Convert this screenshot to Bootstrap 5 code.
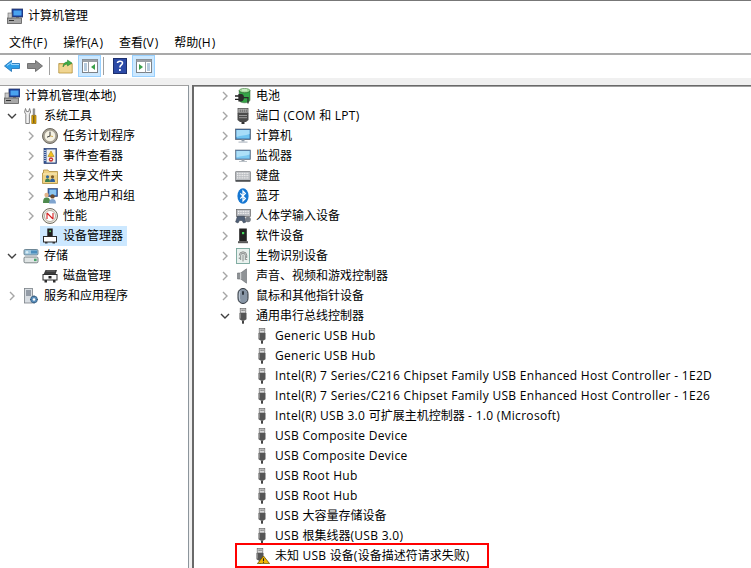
<!DOCTYPE html>
<html lang="zh-CN">
<head>
<meta charset="utf-8">
<title>计算机管理</title>
<link rel="stylesheet" href="https://cdn.jsdelivr.net/npm/bootstrap@5.3.0/dist/css/bootstrap.min.css">
<style>
html,body{height:100%;overflow:hidden;background:#fff}
body{font:12px/20px "Open Sans","Noto Sans CJK SC",sans-serif;color:#000}
.lat{letter-spacing:.3px}
.win{height:568px;width:751px;border-top:1px solid #777;overflow:hidden}
.titlebar{height:30px;padding-left:7px;gap:5px}
.menubar{height:24px;border-bottom:2px solid #a9a9a9;padding-left:9px;gap:16px;padding-top:2px}
.menubar .lat{letter-spacing:1px}
.toolbar{height:23px;padding-left:4px}
.tb-ico{width:16px;height:16px;flex:none}
.tb-btn{width:23px;height:22px;background:#cce8ff;border:1px solid #99d1ff;flex:none}
.tb-sep{width:1px;height:18px;background:#a0a0a0;flex:none}
.band{height:7px;background:#f0f0f0}
.panes{height:484px}
.pane-l{width:189px;flex:none;border-top:1px solid #a0a0a0;border-right:1px solid #8c959c}
.gutter{width:3px;flex:none;background:#f0f0f0}
.pane-r{flex:1;border-top:1px solid #696969;border-left:2px solid #696969;min-width:0;box-shadow:inset 0 1px #a0a0a0}
.tree-row{height:20px;white-space:nowrap}
.pl-root{padding-left:4px}
.pl-a{padding-left:5px}
.pl-b{padding-left:24px}
.pl-c{padding-left:24px}
.pl-c .node{margin-left:-1px}
.pl-d{padding-left:42px}
.chev{width:18px;height:20px;flex:none;padding-left:2px}
.chev svg{display:block;margin-top:5px;width:10px;height:10px}
.node{gap:5px;height:20px}
.node svg{width:16px;height:16px;flex:none}
.node-sel{background:#cce8ff;margin-left:-2px;padding-left:2px;padding-right:4px}
.red-box{position:absolute;left:-19px;top:-3px;width:254px;height:25px;border:2px solid #f00}
.sp-a{margin-right:7px}
.sp-b{margin-left:6px;margin-right:8px}
.sp-c{margin-right:4px}
.sp-d{margin-left:2px;margin-right:9px}
.sp-e{margin-right:3px}
</style>
</head>
<body>
<svg width="0" height="0" class="position-absolute">
<defs>
<symbol id="cm" viewBox="0 0 16 16"><rect x="5" y="1" width="11" height="8" fill="#1a3f9e" stroke="#2b3a66" stroke-width=".8"/><rect x="6.5" y="2.5" width="8" height="5" fill="#4aa3ef"/><rect x="9" y="9" width="3" height="2" fill="#777"/><rect x="0.5" y="10" width="14" height="5.5" fill="#a8a8a8" stroke="#5a5a5a" stroke-width=".8"/><rect x="2" y="12" width="5" height="1" fill="#333"/><rect x="1" y="5" width="4" height="5" fill="#c9c9c9" stroke="#666" stroke-width=".6"/></symbol>
<symbol id="tools" viewBox="0 0 16 16"><path d="M2.5 .5 3.6 3.6H5.6L6.6 .5 7.6 4 6.4 6.5V15.5H2.8V6.5L1.6 4Z" fill="#f2f2f2" stroke="#777" stroke-width=".9"/><path d="M10 .8h1.8v6.4H10z" fill="#9a9a9a" stroke="#666" stroke-width=".4"/><path d="M8.8 7.4h4.2v8.2H8.8z" fill="#f2b200" stroke="#8a6200" stroke-width=".7"/><path d="M10.9 8v7" stroke="#333"/></symbol>
<symbol id="clock" viewBox="0 0 16 16"><circle cx="8" cy="8" r="7.5" fill="#a6a094" stroke="#6e6a60"/><circle cx="8" cy="8" r="5.7" fill="#f5f2e4" stroke="#8a8577" stroke-width=".5"/><path d="M8 3.6V8l-3 1.2" fill="none" stroke="#3b3b3b" stroke-width="1"/><path d="M8 8l3 .5" stroke="#c89a2e" stroke-width=".8"/></symbol>
<symbol id="event" viewBox="0 0 16 16"><rect x="2" y="0.5" width="12.5" height="15" fill="#35589b" stroke="#2a3c6b" stroke-width=".7"/><rect x="4.5" y="1.5" width="9" height="13" fill="#f3f1e9"/><path d="M3 2v12" stroke="#dfe6f4" stroke-dasharray="1 1" stroke-width="1.4"/><path d="M9 3l3 5.5H6z" fill="#f3c21f" stroke="#9a7400" stroke-width=".5"/><circle cx="9" cy="11.5" r="2.2" fill="#cd3a3a"/><path d="M8 11.5h2" stroke="#fff" stroke-width=".8"/></symbol>
<symbol id="share" viewBox="0 0 16 16"><path d="M.5 5V15.5H15.5V3.5H7L6 2H1.5V5Z" fill="#efd284" stroke="#ad8c3c" stroke-width=".8"/><path d="M1 6H15" stroke="#f8ecc0"/><circle cx="5.5" cy="8.8" r="1.6" fill="#336a9e"/><path d="M3 14c0-3 1-3.6 2.5-3.6S8 11 8 14Z" fill="#3c7f4f"/><circle cx="10.5" cy="8.8" r="1.6" fill="#7a5a2a"/><path d="M8 14c0-3 1-3.6 2.5-3.6s2.5.6 2.5 3.6Z" fill="#2d5f9c"/></symbol>
<symbol id="users" viewBox="0 0 16 16"><rect x="6" y="0.5" width="9.5" height="8" fill="#2b62b5" stroke="#3f4f6f" stroke-width=".7"/><rect x="7.3" y="1.6" width="7" height="5.6" fill="#8cc6ef"/><circle cx="4.6" cy="7" r="2.2" fill="#e2b48a"/><path d="M1 15c0-4.5 1.4-5.6 3.6-5.6S8.2 10.5 8.2 15Z" fill="#4e8a4e"/><circle cx="10.5" cy="8.4" r="2.2" fill="#6b4a2d"/><path d="M7 15.5c0-3.4 1.4-4.6 3.5-4.6s3.5 1.2 3.5 4.6Z" fill="#7fa4cf"/></symbol>
<symbol id="perf" viewBox="0 0 16 16"><circle cx="8" cy="8" r="7.5" fill="#ece9df" stroke="#716e64"/><circle cx="8" cy="8" r="5.5" fill="#fff" stroke="#8a8577" stroke-width=".6"/><path d="M5 5l6 6M5 11V5M11 5v6" fill="none" stroke="#d32020" stroke-width="1.1"/></symbol>
<symbol id="dm" viewBox="0 0 16 16"><rect x="5.3" y="0.5" width="5.4" height="8" fill="#1f1f1f"/><rect x="7.3" y="2.5" width="1.6" height="1.6" fill="#5fdc6a"/><rect x="1.5" y="8.5" width="13" height="5.5" fill="#fff" stroke="#2b2b2b"/><rect x="3" y="14" width="2.5" height="1.5" fill="#333"/><rect x="10.5" y="14" width="2.5" height="1.5" fill="#333"/></symbol>
<symbol id="store" viewBox="0 0 16 16"><rect x="1" y="1.5" width="14" height="5.5" rx="1.2" fill="#9fc7de" stroke="#55707f" stroke-width=".8"/><rect x="8" y="2.5" width="6" height="3" fill="#4b8ebd"/><circle cx="4" cy="4.2" r="1.3" fill="#d9ecf4"/><rect x="1" y="9" width="14" height="5.8" rx="1.2" fill="#dfe4e4" stroke="#5f6b6f" stroke-width=".8"/><rect x="11" y="10.7" width="2.6" height="2.4" fill="#4aa56b"/></symbol>
<symbol id="disk" viewBox="0 0 16 16"><path d="M3.5 2h11.5l-1.5 4.5H1.5z" fill="#3c3c3c"/><path d="M4.5 3h8.5" stroke="#8a8a8a" stroke-width=".7"/><rect x="1" y="6.5" width="14" height="5.5" fill="#fbfbfb" stroke="#2f2f2f"/><rect x="6.5" y="8" width="3" height="2.5" fill="#222"/><rect x="2.5" y="12" width="2.5" height="2.5" fill="#2d2d2d"/><rect x="11" y="12" width="2.5" height="2.5" fill="#2d2d2d"/></symbol>
<symbol id="svc" viewBox="0 0 16 16"><rect x="1.5" y="0.5" width="8" height="14.5" fill="#d8dde2" stroke="#7a8087" stroke-width=".8"/><path d="M3 3h5M3 5h5M3 7h5" stroke="#4f5b6a"/><circle cx="11" cy="11.5" r="3.4" fill="#5b8fbc" stroke="#2f5678" stroke-width=".7"/><circle cx="11" cy="11.5" r="1.2" fill="#fff"/><path d="M11 7.4v1.4M11 14.2v1.4M7 11.5h1.4M13.6 11.5H15" stroke="#2f5678" stroke-width="1.1"/></symbol>
<symbol id="bat" viewBox="0 0 16 16"><ellipse cx="9.6" cy="2.6" rx="5.4" ry="2.2" fill="#a8dfa0" stroke="#3c7a3c" stroke-width=".6"/><path d="M4.2 2.6V12c0 1.6 2.4 2.8 5.4 2.8S15 13.6 15 12V2.6c0 1.2-2.4 2.2-5.4 2.2S4.2 3.8 4.2 2.6Z" fill="#35a548" stroke="#2b5e2b" stroke-width=".5"/><path d="M7 2h5" stroke="#fff" stroke-width=".7"/><path d="M0 8h4M0 11.4h4" stroke="#1f1f1f" stroke-width="1.3"/><path d="M3.4 6h3c1.5 0 2.6 1.2 2.6 3.6s-1.1 3.8-2.6 3.8h-3z" fill="#2b2b2b"/><path d="M8.5 9.7h4.5V15.5" fill="none" stroke="#2b2b2b" stroke-width="1.3"/></symbol>
<symbol id="port" viewBox="0 0 16 16"><rect x="3" y="0.5" width="10" height="4.5" fill="#b6b6b6" stroke="#565656" stroke-width=".8"/><path d="M5.2 1.5v2.5M7.2 1.5v2.5M9.2 1.5v2.5M11.2 1.5v2.5" stroke="#4d4d4d" stroke-width=".8"/><path d="M2.5 5h11v7l-2.5 2H5l-2.5-2z" fill="#4b4b4b"/><path d="M4 7.5h8M4 9.7h8" stroke="#9a9a9a"/><path d="M6.5 14h3v2h-3z" fill="#333"/></symbol>
<symbol id="pc" viewBox="0 0 16 16"><rect x="0.5" y="1" width="15" height="10.5" fill="#3f6ea6" stroke="#44505f" stroke-width=".6"/><rect x="1.5" y="2" width="13" height="8.5" fill="#6fc3f0"/><path d="M1.5 2h13v4c-4 2-9 1-13 3z" fill="#a7dcf8"/><path d="M6.5 11.5h3v2h-3z" fill="#8e9aa6"/><path d="M3.5 13.5h9v1.2h-9z" fill="#b7bec6"/></symbol>
<symbol id="mon" viewBox="0 0 16 16"><rect x="0.5" y="2" width="15" height="9.5" fill="#5f8bb8" stroke="#5a6a7a" stroke-width=".6"/><rect x="1.5" y="3" width="13" height="7.5" fill="#7cc9f1"/><path d="M1.5 3h13v3.5c-4 2-9 1-13 3z" fill="#aee0f8"/><path d="M6.5 11.5h3v1.5h-3z" fill="#9aa3ac"/><path d="M4 13h8v1H4z" fill="#bcc2c8"/></symbol>
<symbol id="kbd" viewBox="0 0 16 16"><rect x="0.5" y="3.5" width="15" height="9" rx=".6" fill="#b9bcc0" stroke="#7a7d81" stroke-width=".7"/><path d="M2 5.5h12M2 7.7h12M2 9.9h12" stroke="#eeeeee" stroke-dasharray="1.1 .6" stroke-width="1.3"/><rect x="0.5" y="12" width="15" height="1.8" fill="#4f5255"/></symbol>
<symbol id="bt" viewBox="0 0 16 16"><ellipse cx="8" cy="8" rx="5.6" ry="7.8" fill="#1677d2"/><path d="M5.3 5.4 10.4 10.5 8 13V3l2.4 2.5L5.3 10.6" fill="none" stroke="#fff" stroke-width="1.2"/></symbol>
<symbol id="hid" viewBox="0 0 16 16"><rect x="1.5" y="1.5" width="14" height="7" fill="#b9bcc2" stroke="#666" stroke-width=".7"/><path d="M3 3.4h11M3 5.4h11" stroke="#f3f3f3" stroke-dasharray="1 .7" stroke-width="1.1"/><path d="M.6 14 2.4 8.2h7L11 14 8.6 15 7 12.5H4.6L3 15Z" fill="#4f5f76" stroke="#333c4a" stroke-width=".5"/><circle cx="13" cy="11.5" r="2.8" fill="#777d86"/></symbol>
<symbol id="soft" viewBox="0 0 16 16"><rect x="4.2" y="0.5" width="7.6" height="13" fill="#222"/><rect x="7" y="4" width="2.2" height="2.2" fill="#43d75c"/><rect x="3" y="13.2" width="10" height="2" fill="#5a5a5a"/></symbol>
<symbol id="bio" viewBox="0 0 16 16"><rect x="1.5" y=".5" width="13" height="15" fill="#e9f1ee" stroke="#77a59a" stroke-width=".9"/><g fill="none" stroke="#666" stroke-width=".75"><path d="M4.3 7.5a3.7 3.7 0 0 1 7.4 0v2.5"/><path d="M5.7 12V7.5a2.3 2.3 0 0 1 4.6 0V12"/><path d="M8 6.5V13.5"/><path d="M4.3 9.5v1.5M11.7 11v1"/></g></symbol>
<symbol id="snd" viewBox="0 0 16 16"><path d="M2.5 5h3.2L11.5 .8V15.2L5.7 11H2.5z" fill="#8f9396" stroke="#686c70" stroke-width=".6"/><path d="M5.7 5V11" stroke="#e1e3e5"/></symbol>
<symbol id="mouse" viewBox="0 0 16 16"><rect x="3" y="0.5" width="10" height="15" rx="5" fill="#8795a5" stroke="#30363d" stroke-width="1"/><rect x="7" y="3" width="2" height="4" rx="1" fill="#2f3740"/><path d="M5 3.5c-1 3-1 6 0 9" stroke="#c7d1dc" fill="none"/></symbol>
<symbol id="usb" viewBox="0 0 16 16"><rect x="5.2" y="0.5" width="5.6" height="4.5" fill="#dadada" stroke="#6d6d6d" stroke-width=".7"/><rect x="6.6" y="1.6" width="1" height="1.2" fill="#444"/><rect x="8.5" y="1.6" width="1" height="1.2" fill="#444"/><path d="M4.5 5h7v6.2l-2 1.4h-3l-2-1.4z" fill="#565656"/><path d="M5.4 5.4v5.2" stroke="#8c8c8c"/><rect x="7" y="12.4" width="2" height="3.3" fill="#444"/></symbol>
<symbol id="c-r" viewBox="0 0 10 10"><path d="M3 1l4 4-4 4" fill="none" stroke="#a6a6a6" stroke-width="1.4"/></symbol>
<symbol id="c-d" viewBox="0 0 10 10"><path d="M1 3l4 4 4-4" fill="none" stroke="#404040" stroke-width="1.4"/></symbol>
</defs>
</svg>

<div class="win d-flex flex-column">
  <div class="titlebar d-flex align-items-center">
    <svg class="tb-ico"><use href="#cm"/></svg><span>计算机管理</span>
  </div>
  <div class="menubar d-flex align-items-center"><span>文件(<span class="lat">F</span>)</span><span>操作(<span class="lat">A</span>)</span><span>查看(<span class="lat">V</span>)</span><span>帮助(<span class="lat">H</span>)</span></div>
  <div class="toolbar d-flex align-items-center">
    <svg class="tb-ico sp-a" viewBox="0 0 16 16"><path d="M.5 8 7.5 2.5V5.5H15.5V10.5H7.5V13.5Z" fill="#2f9fe8" stroke="#1a6db2" stroke-width=".8"/><path d="M3 7.5l4.5-3V6.5H15" fill="none" stroke="#a8dcff" stroke-width=".9"/></svg>
    <svg class="tb-ico" viewBox="0 0 16 16"><path d="M15.5 8 8.5 2.5V5.5H.5V10.5H8.5V13.5Z" fill="#8a8a8a" stroke="#5e5e5e" stroke-width=".8"/></svg>
    <span class="tb-sep sp-b"></span>
    <svg class="tb-ico sp-c" viewBox="0 0 16 16"><path d="M.8 5.5H14.2V15H.8Z" fill="#e9c875" stroke="#b08f3c" stroke-width=".8"/><path d="M1.5 7h12V14.3h-12z" fill="#f0d591"/><path d="M5 9c0-3.5 2-5 4.5-5V2L14 5 9.5 8V6C7.5 6 6 7 5 9Z" fill="#3fae49" stroke="#237a2a" stroke-width=".5"/></svg>
    <span class="tb-btn d-flex align-items-center justify-content-center"><svg class="tb-ico" viewBox="0 0 16 16"><rect x=".5" y="1.5" width="15" height="13" fill="#fff" stroke="#7c8288"/><path d="M.5 1.5h15v2.5H.5z" fill="#9aa0a6"/><path d="M2 6h3M2 8h3M2 10h3M2 12h3" stroke="#6a96bd"/><path d="M6.5 4v10.5" stroke="#9aa0a6"/><path d="M13 6v6L9 9z" fill="#3aa14a"/></svg></span>
    <span class="tb-sep sp-d"></span>
    <svg class="tb-ico sp-e" viewBox="0 0 16 16"><rect x=".5" y=".5" width="13" height="15" fill="#2c4aa6" stroke="#1d2f6d"/><path d="M4.5 5c0-2 5-2.6 5 0 0 2-2.6 2-2.6 4.5" fill="none" stroke="#fff" stroke-width="1.6"/><rect x="6" y="11" width="1.8" height="2" fill="#fff"/></svg>
    <span class="tb-btn d-flex align-items-center justify-content-center"><svg class="tb-ico" viewBox="0 0 16 16"><rect x=".5" y="1.5" width="15" height="13" fill="#fff" stroke="#7c8288"/><path d="M.5 1.5h15v2.5H.5z" fill="#9aa0a6"/><path d="M11 6h3M11 8h3M11 10h3M11 12h3" stroke="#6a96bd"/><path d="M9.5 4v10.5" stroke="#9aa0a6"/><path d="M3 6v6l4-3z" fill="#3aa14a"/></svg></span>
  </div>
  <div class="band"></div>
  <div class="panes d-flex">
    <div class="pane-l">
      <div class="tree-row pl-root d-flex"><span class="node d-flex align-items-center"><svg><use href="#cm"/></svg>计算机管理(本地)</span></div>
      <div class="tree-row pl-a d-flex"><span class="chev"><svg><use href="#c-d"/></svg></span><span class="node d-flex align-items-center"><svg><use href="#tools"/></svg>系统工具</span></div>
      <div class="tree-row pl-b d-flex"><span class="chev"><svg><use href="#c-r"/></svg></span><span class="node d-flex align-items-center"><svg><use href="#clock"/></svg>任务计划程序</span></div>
      <div class="tree-row pl-b d-flex"><span class="chev"><svg><use href="#c-r"/></svg></span><span class="node d-flex align-items-center"><svg><use href="#event"/></svg>事件查看器</span></div>
      <div class="tree-row pl-b d-flex"><span class="chev"><svg><use href="#c-r"/></svg></span><span class="node d-flex align-items-center"><svg><use href="#share"/></svg>共享文件夹</span></div>
      <div class="tree-row pl-b d-flex"><span class="chev"><svg><use href="#c-r"/></svg></span><span class="node d-flex align-items-center"><svg><use href="#users"/></svg>本地用户和组</span></div>
      <div class="tree-row pl-b d-flex"><span class="chev"><svg><use href="#c-r"/></svg></span><span class="node d-flex align-items-center"><svg><use href="#perf"/></svg>性能</span></div>
      <div class="tree-row pl-b d-flex"><span class="chev"></span><span class="node node-sel d-flex align-items-center"><svg><use href="#dm"/></svg>设备管理器</span></div>
      <div class="tree-row pl-a d-flex"><span class="chev"><svg><use href="#c-d"/></svg></span><span class="node d-flex align-items-center"><svg><use href="#store"/></svg>存储</span></div>
      <div class="tree-row pl-b d-flex"><span class="chev"></span><span class="node d-flex align-items-center"><svg><use href="#disk"/></svg>磁盘管理</span></div>
      <div class="tree-row pl-a d-flex"><span class="chev"><svg><use href="#c-r"/></svg></span><span class="node d-flex align-items-center"><svg><use href="#svc"/></svg>服务和应用程序</span></div>
    </div>
    <div class="gutter"></div>
    <div class="pane-r">
      <div class="tree-row pl-c d-flex"><span class="chev"><svg><use href="#c-r"/></svg></span><span class="node d-flex align-items-center"><svg><use href="#bat"/></svg>电池</span></div>
      <div class="tree-row pl-c d-flex"><span class="chev"><svg><use href="#c-r"/></svg></span><span class="node d-flex align-items-center"><svg><use href="#port"/></svg><span>端口<span class="lat"> (COM </span>和<span class="lat"> LPT)</span></span></span></div>
      <div class="tree-row pl-c d-flex"><span class="chev"><svg><use href="#c-r"/></svg></span><span class="node d-flex align-items-center"><svg><use href="#pc"/></svg>计算机</span></div>
      <div class="tree-row pl-c d-flex"><span class="chev"><svg><use href="#c-r"/></svg></span><span class="node d-flex align-items-center"><svg><use href="#mon"/></svg>监视器</span></div>
      <div class="tree-row pl-c d-flex"><span class="chev"><svg><use href="#c-r"/></svg></span><span class="node d-flex align-items-center"><svg><use href="#kbd"/></svg>键盘</span></div>
      <div class="tree-row pl-c d-flex"><span class="chev"><svg><use href="#c-r"/></svg></span><span class="node d-flex align-items-center"><svg><use href="#bt"/></svg>蓝牙</span></div>
      <div class="tree-row pl-c d-flex"><span class="chev"><svg><use href="#c-r"/></svg></span><span class="node d-flex align-items-center"><svg><use href="#hid"/></svg>人体学输入设备</span></div>
      <div class="tree-row pl-c d-flex"><span class="chev"><svg><use href="#c-r"/></svg></span><span class="node d-flex align-items-center"><svg><use href="#soft"/></svg>软件设备</span></div>
      <div class="tree-row pl-c d-flex"><span class="chev"><svg><use href="#c-r"/></svg></span><span class="node d-flex align-items-center"><svg><use href="#bio"/></svg>生物识别设备</span></div>
      <div class="tree-row pl-c d-flex"><span class="chev"><svg><use href="#c-r"/></svg></span><span class="node d-flex align-items-center"><svg><use href="#snd"/></svg>声音、视频和游戏控制器</span></div>
      <div class="tree-row pl-c d-flex"><span class="chev"><svg><use href="#c-r"/></svg></span><span class="node d-flex align-items-center"><svg><use href="#mouse"/></svg>鼠标和其他指针设备</span></div>
      <div class="tree-row pl-c d-flex"><span class="chev"><svg><use href="#c-d"/></svg></span><span class="node d-flex align-items-center"><svg><use href="#usb"/></svg>通用串行总线控制器</span></div>
      <div class="tree-row pl-d d-flex"><span class="chev"></span><span class="node d-flex align-items-center"><svg><use href="#usb"/></svg><span class="lat">Generic USB Hub</span></span></div>
      <div class="tree-row pl-d d-flex"><span class="chev"></span><span class="node d-flex align-items-center"><svg><use href="#usb"/></svg><span class="lat">Generic USB Hub</span></span></div>
      <div class="tree-row pl-d d-flex"><span class="chev"></span><span class="node d-flex align-items-center"><svg><use href="#usb"/></svg><span class="lat">Intel(R) 7 Series/C216 Chipset Family USB Enhanced Host Controller - 1E2D</span></span></div>
      <div class="tree-row pl-d d-flex"><span class="chev"></span><span class="node d-flex align-items-center"><svg><use href="#usb"/></svg><span class="lat">Intel(R) 7 Series/C216 Chipset Family USB Enhanced Host Controller - 1E26</span></span></div>
      <div class="tree-row pl-d d-flex"><span class="chev"></span><span class="node d-flex align-items-center"><svg><use href="#usb"/></svg><span><span class="lat">Intel(R) USB 3.0 </span>可扩展主机控制器<span class="lat"> - 1.0 (Microsoft)</span></span></span></div>
      <div class="tree-row pl-d d-flex"><span class="chev"></span><span class="node d-flex align-items-center"><svg><use href="#usb"/></svg><span class="lat">USB Composite Device</span></span></div>
      <div class="tree-row pl-d d-flex"><span class="chev"></span><span class="node d-flex align-items-center"><svg><use href="#usb"/></svg><span class="lat">USB Composite Device</span></span></div>
      <div class="tree-row pl-d d-flex"><span class="chev"></span><span class="node d-flex align-items-center"><svg><use href="#usb"/></svg><span class="lat">USB Root Hub</span></span></div>
      <div class="tree-row pl-d d-flex"><span class="chev"></span><span class="node d-flex align-items-center"><svg><use href="#usb"/></svg><span class="lat">USB Root Hub</span></span></div>
      <div class="tree-row pl-d d-flex"><span class="chev"></span><span class="node d-flex align-items-center"><svg><use href="#usb"/></svg><span><span class="lat">USB </span>大容量存储设备</span></span></div>
      <div class="tree-row pl-d d-flex"><span class="chev"></span><span class="node d-flex align-items-center"><svg><use href="#usb"/></svg><span><span class="lat">USB </span>根集线器<span class="lat">(USB 3.0)</span></span></span></div>
      <div class="tree-row pl-d d-flex"><span class="chev"></span><span class="node d-flex align-items-center position-relative"><svg viewBox="0 0 16 16"><use href="#usb" x="-2" width="16" height="16"/><path d="M9.5 8 3.4 15.6H15.6Z" fill="#f2b705" stroke="#6d5200" stroke-width=".8"/><path d="M9.5 10.2v2.8M9.5 13.8v1" stroke="#222" stroke-width="1.1"/></svg><span>未知<span class="lat"> USB </span>设备<span class="lat">(</span>设备描述符请求失败<span class="lat">)</span></span><span class="red-box"></span></span></div>
    </div>
  </div>
</div>
<script src="https://cdn.jsdelivr.net/npm/bootstrap@5.3.0/dist/js/bootstrap.bundle.min.js"></script>
</body>
</html>
